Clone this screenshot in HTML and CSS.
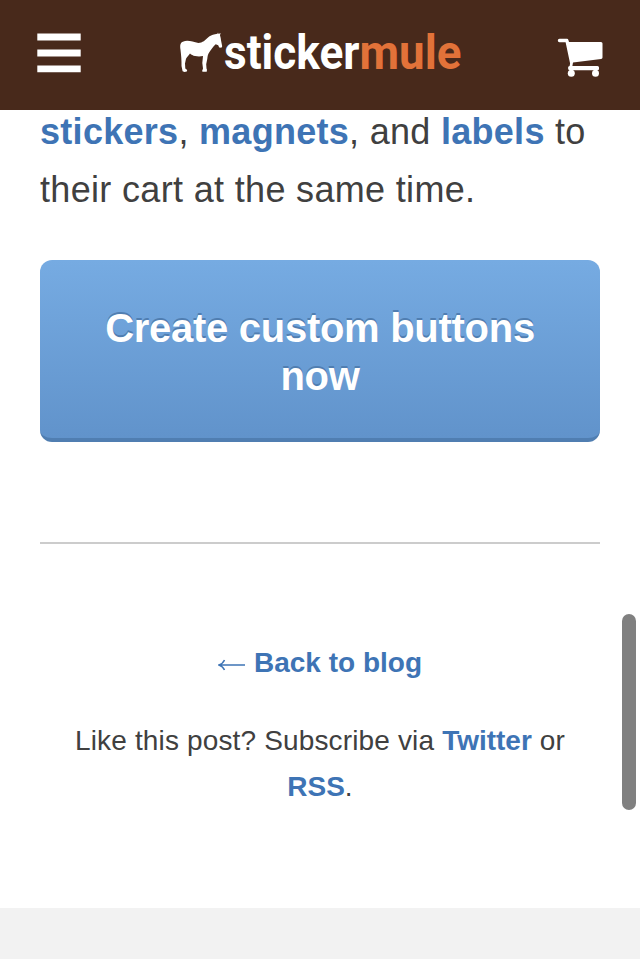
FILE: index.html
```html
<!DOCTYPE html>
<html lang="en">
<head>
<meta charset="utf-8">
<title>Sticker Mule</title>
<link rel="stylesheet" href="styles.css">
</head>
<body>
<header class="header">
  <svg class="menu" width="44" height="40" viewBox="0 0 44 40" aria-label="Menu"><path fill="#fff" d="M.3.5h43.4v7H.3zm0 16h43.4v7H.3zm0 16h43.4v6.7H.3z"/></svg>
  <svg class="logo" width="290" height="90" viewBox="175 10 290 90" aria-label="stickermule">
    <path fill="#fff" d="M218 32.500l.6 1.500 2-1-.6 2.300c.7 1.800.8 3.600 1.100 5.400l1.100 5.500-.8 1.500-2.200-.2-1-2.300-2.500-.9c-2.600 2.200-4.200 5-6.400 8-1.400 2-1.700 3.800-2 6.500l-1.100 5.500.3 4.200.5 1.200-.3 2h-4.100l-.5-.8.9-2.400-.7-5.500.7-7c-2.700.6-5.200.5-8 .1-2-.5-3.500-1.300-5-2.600-1.200 2-2.700 3-4 5.200l-1 4.700.3 5 1.900 1.600-.4 1.400-2.300.5-1.900-.7-1.100-5.300c.2-5.300-.4-11.200-1-16.200-.4-3.500-.8-6.700 2.300-8 5-2 9.600.1 15.600 1.200 4.200 0 6.900-2.700 9.900-5.600 1.500-1.300 3.700-2.300 6.700-3l2.500-.5z"/>
    <text class="word" x="224" y="69" fill="#fff" textLength="135.500" lengthAdjust="spacingAndGlyphs">sticker</text>
    <text class="word" x="359.500" y="69" fill="#e27239" textLength="102" lengthAdjust="spacingAndGlyphs">mule</text>
  </svg>
  <svg class="cart" width="46" height="40" viewBox="557 38 46 40" aria-label="Cart">
    <path fill="#fff" d="M559.500 38.700h7.500q1 0 1.400 1.400l.6 2h32q1.500 0 1.500 1.500v13.800q0 1.300-1.400 1.500l-28.100 3.700-.6 3.400h25.100q1.500 0 1.500 1.500v1.200q0 1.500-1.500 1.500h-27.800q-1.600 0-1.600-1.600v-1.200q0-1.500 1.500-1.500l.5-2.500-4.500-21.200h-6.100q-1.700 0-1.700-1.700t1.700-1.800z"/>
    <circle cx="571.300" cy="73.300" r="3.500" fill="#fff"/><circle cx="595.500" cy="73.300" r="3.500" fill="#fff"/>
  </svg>
</header>
<main class="content">
  <p class="intro"><span class="line first"><a>stickers</a>, <a>magnets</a>, and <a>labels</a> to</span> <span class="line second">their cart at the same time.</span></p>
  <a class="button">Create custom buttons now</a>
  <hr class="rule">
  <p class="back"><a><svg class="arrow" width="28" height="14" viewBox="0 0 28 14"><path fill="none" stroke="#3e74b5" stroke-width="1.500" d="M27 7H2M6.500 2Q5 5.500 1 7q4 1.500 5.500 5"/></svg><span class="label">Back to blog</span></a></p>
  <p class="subscribe">Like this post? Subscribe via <a>Twitter</a> or <a>RSS</a>.</p>
</main>
<footer class="footer"></footer>
<div class="scrollbar"></div>
</body>
</html>
```
FILE: styles.css
```css
* { box-sizing: border-box; }
body {
  margin: 0;
  height: 959px;
  overflow: hidden;
  display: flex;
  flex-direction: column;
  background: #fff;
  color: #404040;
  font-family: "Liberation Sans", Arial, sans-serif;
}
p { margin: 0; }
a { color: #3e74b5; font-weight: bold; }
.header {
  position: relative;
  z-index: 1;
  height: 110px;
  flex: none;
  display: flex;
  justify-content: space-between;
  align-items: flex-start;
  padding: 0 37px;
  background: #48291b;
}
.menu { margin-top: 33px; }
.logo { margin: 10px 0 0 2px; }
.cart { margin-top: 38px; }
.word { font: 700 49px Roboto, sans-serif; }
.content { height: 798px; flex: none; padding: 0 40px; }
.intro {
  margin-top: -7px;
  font-size: 36px;
  line-height: 57.600px;
}
.line { display: block; white-space: nowrap; }
.first { letter-spacing: .29px; }
.second { letter-spacing: .33px; }
.button {
  display: block;
  height: 182px;
  margin-top: 41.800px;
  padding: 44px 60px 34px;
  border-bottom: 4px solid #507eb1;
  border-radius: 12px;
  background: linear-gradient(#76abe2, #6193cb);
  color: #fff;
  font-size: 40px;
  line-height: 48px;
  letter-spacing: -.28px;
  text-align: center;
  text-shadow: 0 -2px 0 #507eb1;
}
.rule { height: 2px; margin: 100px 0 0; border: 0; background: #ccc; }
.back {
  margin-top: 96px;
  font-size: 28px;
  line-height: 46px;
  text-align: center;
}
.arrow { margin-right: 8px; }
.subscribe {
  margin-top: 32px;
  padding: 0 20px;
  font-size: 28px;
  line-height: 46px;
  letter-spacing: .15px;
  text-align: center;
}
.subscribe a { letter-spacing: 0; }
.footer { flex: 1; background: #f2f2f2; }
.scrollbar {
  position: absolute;
  z-index: 2;
  top: 614px;
  right: 4px;
  width: 14px;
  height: 196px;
  border-radius: 7px;
  background: #808080;
}
```
